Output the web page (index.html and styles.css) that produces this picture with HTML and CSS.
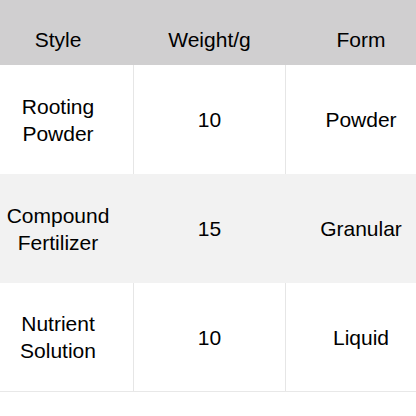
FILE: index.html
```html
<!DOCTYPE html>
<html>
<head>
<meta charset="utf-8">
<link rel="stylesheet" href="styles.css">
</head>
<body>
<div class="table">
  <div class="row head">
    <div class="cell c1">Style</div>
    <div class="cell c2">Weight/g</div>
    <div class="cell c3">Form</div>
  </div>
  <div class="row">
    <div class="cell c1">Rooting<br>Powder</div>
    <div class="cell c2">10</div>
    <div class="cell c3">Powder</div>
  </div>
  <div class="row alt">
    <div class="cell c1">Compound<br>Fertilizer</div>
    <div class="cell c2">15</div>
    <div class="cell c3">Granular</div>
  </div>
  <div class="row last">
    <div class="cell c1">Nutrient<br>Solution</div>
    <div class="cell c2">10</div>
    <div class="cell c3">Liquid</div>
  </div>
</div>
</body>
</html>
```
FILE: styles.css
```css
html, body {
  margin: 0;
  padding: 0;
  background: #ffffff;
}
body {
  width: 416px;
  height: 416px;
  overflow: hidden;
  font-family: "Liberation Sans", Arial, sans-serif;
  font-size: 21px;
  line-height: 27px;
  color: #000000;
}
.table {
  display: flex;
  flex-direction: column;
}
.row {
  display: grid;
  grid-template-columns: 134px 152px 130px;
  height: 109px;
  background: #ffffff;
}
.row.head {
  height: 65px;
  background: #d0cfd0;
}
.row.alt {
  background: #f2f2f2;
}
.row.last {
  height: 108px;
  border-bottom: 1px solid #e8e8e8;
}
.cell {
  display: flex;
  align-items: center;
  justify-content: center;
  text-align: center;
}
.head .cell {
  padding-top: 14px;
}
.c1 {
  padding-right: 17px;
  border-right: 1px solid #e6e6e6;
}
.c2 {
  border-right: 1px solid #e6e6e6;
}
.c3 {
  padding-left: 20px;
}
.head .c1, .head .c2, .alt .c1, .alt .c2 {
  border-right-color: transparent;
}
```
